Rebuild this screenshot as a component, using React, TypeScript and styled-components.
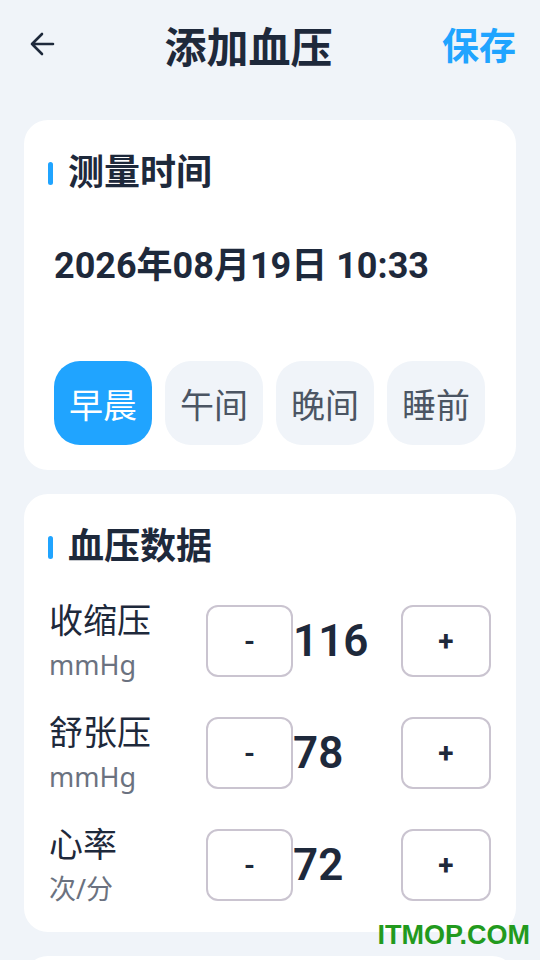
import { useState } from 'react';
import styled, { createGlobalStyle } from 'styled-components';

const GlobalStyle = createGlobalStyle`
  body {
    margin: 0;
    background: #f0f4f9;
    font-family: Roboto, "Noto Sans CJK SC", sans-serif;
    color: #1e293b;
  }
`;

const PERIODS = ['早晨', '午间', '晚间', '睡前'];

const Page = styled.div`
  width: 540px;
  height: 960px;
  overflow: hidden;
  position: relative;
`;

const Header = styled.header`
  height: 88px;
  display: flex;
  align-items: center;
  justify-content: space-between;
  padding: 0 24px 0 30px;
  margin-bottom: 32px;
`;

const BackButton = styled.button`
  background: none;
  border: none;
  padding: 0;
  display: flex;
  color: #1e293b;
`;

const Title = styled.h1`
  margin: 0;
  font-size: 42px;
  font-weight: 700;
  color: #1e293b;
`;

const SaveButton = styled.button`
  background: none;
  border: none;
  padding: 0;
  font-family: inherit;
  font-size: 37px;
  font-weight: 700;
  color: #20a4ff;
`;

const Card = styled.section<{ $height?: number }>`
  margin: 0 24px 24px;
  background: #fff;
  border-radius: 24px;
  padding: 30px 24px 25px;
  min-height: ${({ $height }) => ($height ? `${$height}px` : 'auto')};
`;

const SectionTitle = styled.h2`
  margin: 0;
  display: flex;
  align-items: center;
  gap: 15px;
  font-size: 36px;
  font-weight: 700;
  line-height: 46px;
  color: #1e293b;

  &::before {
    content: '';
    width: 5px;
    height: 23px;
    border-radius: 3px;
    background: #20a4ff;
  }
`;

const DateText = styled.div`
  padding: 46px 0 0 6px;
  height: 119px;
  font-size: 36px;
  font-weight: 700;
  line-height: 48px;
  color: #1e293b;
`;

const ChipRow = styled.div`
  display: flex;
  gap: 13px;
  padding-left: 6px;
`;

const Chip = styled.button<{ $active?: boolean }>`
  width: 98px;
  height: 84px;
  border: none;
  border-radius: 26px;
  font-family: inherit;
  font-size: 34px;
  color: ${({ $active }) => ($active ? '#fff' : '#4b5563')};
  background: ${({ $active }) => ($active ? '#20a4ff' : '#f0f4f9')};
`;

const Rows = styled.div`
  display: flex;
  flex-direction: column;
  gap: 40px;
  margin: 35px 0 6px;
`;

const Row = styled.div`
  height: 72px;
  display: flex;
  align-items: flex-start;
`;

const Label = styled.div`
  width: 157px;
  padding-left: 1px;
  display: flex;
  flex-direction: column;
  margin-top: -6px;
`;

const LabelName = styled.span`
  font-size: 34px;
  line-height: 44px;
  color: #1e293b;
`;

const Unit = styled.span`
  font-family: "Noto Sans", "Noto Sans CJK SC", sans-serif;
  font-size: 27px;
  line-height: 44px;
  color: #6b7280;
`;

const StepButton = styled.button<{ $wide?: boolean }>`
  width: ${({ $wide }) => ($wide ? '90px' : '87px')};
  height: 72px;
  border: 2px solid #cac4d0;
  border-radius: 12px;
  background: #fff;
  font-family: inherit;
  font-size: 28px;
  font-weight: 700;
  color: #1e293b;
  padding: 0;
`;

const Value = styled.span`
  width: 108px;
  font-size: 44px;
  font-weight: 600;
  line-height: 72px;
  color: #1e293b;
`;

const Watermark = styled.div`
  position: absolute;
  right: 10px;
  bottom: 9px;
  font-family: "Liberation Sans", Arial, sans-serif;
  font-size: 27px;
  font-weight: 700;
  color: #229a1d;
`;

function Stepper({ name, unit, initial }: { name: string; unit: string; initial: number }) {
  const [value, setValue] = useState(initial);
  return (
    <Row>
      <Label>
        <LabelName>{name}</LabelName>
        <Unit>{unit}</Unit>
      </Label>
      <StepButton onClick={() => setValue(value - 1)}>-</StepButton>
      <Value>{value}</Value>
      <StepButton $wide onClick={() => setValue(value + 1)}>+</StepButton>
    </Row>
  );
}

export default function App() {
  const [period, setPeriod] = useState(0);

  return (
    <Page>
      <GlobalStyle />
      <Header>
        <BackButton>
          <svg width="25" height="24" viewBox="0 0 25 24" fill="none" stroke="currentColor" strokeWidth="2.6" strokeLinecap="round" strokeLinejoin="round">
            <path d="M23 12H2M12 2L2 12l10 10" />
          </svg>
        </BackButton>
        <Title>添加血压</Title>
        <SaveButton>保存</SaveButton>
      </Header>

      <Card>
        <SectionTitle>测量时间</SectionTitle>
        <DateText>2026年08月19日 10:33</DateText>
        <ChipRow>
          {PERIODS.map((p, i) => (
            <Chip key={p} $active={i === period} onClick={() => setPeriod(i)}>
              {p}
            </Chip>
          ))}
        </ChipRow>
      </Card>

      <Card>
        <SectionTitle>血压数据</SectionTitle>
        <Rows>
          <Stepper name="收缩压" unit="mmHg" initial={116} />
          <Stepper name="舒张压" unit="mmHg" initial={78} />
          <Stepper name="心率" unit="次/分" initial={72} />
        </Rows>
      </Card>

      <Card $height={200} />

      <Watermark>ITMOP.COM</Watermark>
    </Page>
  );
}
